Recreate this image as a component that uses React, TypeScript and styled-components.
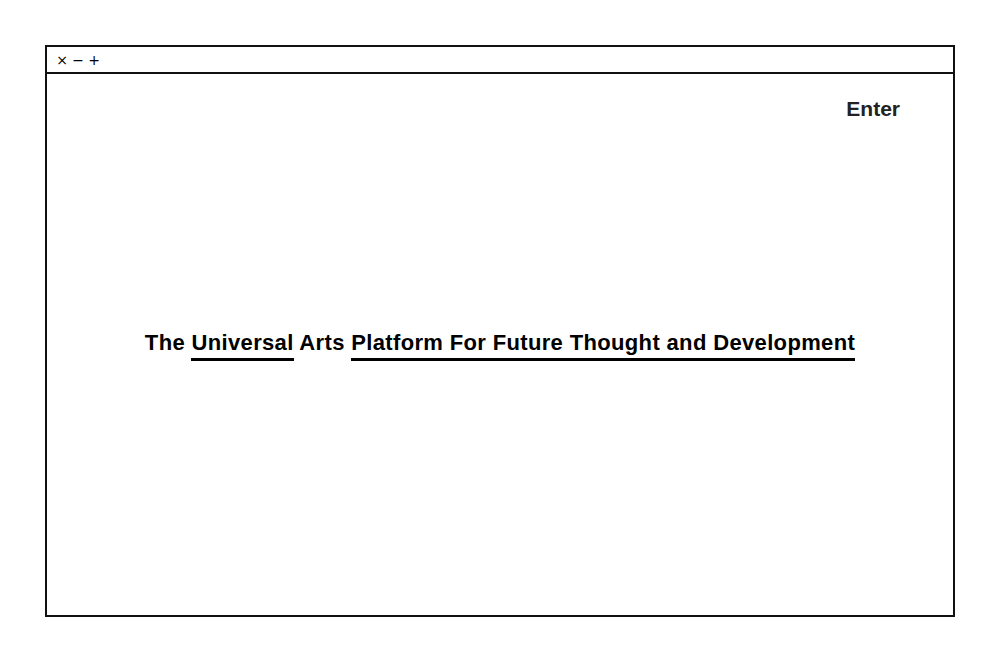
import React from "react";
import styled, { createGlobalStyle } from "styled-components";

const Global = createGlobalStyle`
  html, body { margin: 0; padding: 0; background: #fff; }
  body { font-family: "Liberation Sans", Arial, sans-serif; color: #000; }
`;

const Page = styled.div`
  box-sizing: border-box;
  height: 663px;
  padding: 45px 45px 46px;
  display: flex;
`;

const Window = styled.div`
  box-sizing: border-box;
  flex: 1;
  border: 2px solid #111;
  display: flex;
  flex-direction: column;
`;

const TitleBar = styled.div`
  box-sizing: border-box;
  height: 27px;
  border-bottom: 2px solid #111;
  display: flex;
  align-items: center;
  gap: 4px;
  padding: 0 0 0 9px;
  line-height: 1;
  color: #000;
`;

const Ctrl = styled.span`
  display: inline-block;
  width: 12px;
  text-align: center;
  font-family: "DejaVu Sans", sans-serif;
  font-size: 14px;
  color: #000;
`;

const Body = styled.div`
  flex: 1;
  display: flex;
  flex-direction: column;
`;

const TopRow = styled.div`
  display: flex;
  justify-content: flex-end;
  padding: 23px 53px 0 0;
`;

const EnterLink = styled.a`
  font-size: 21px;
  font-weight: 700;
  color: #222;
  text-decoration: none;
`;

const Center = styled.div`
  flex: 1;
  display: flex;
  align-items: center;
  justify-content: center;
  padding-bottom: 44px;
`;

const Headline = styled.h1`
  margin: 0;
  font-size: 22px;
  letter-spacing: 0.35px;
  font-weight: 700;
  line-height: 1;
  white-space: nowrap;
`;

const Under = styled.span`
  display: inline-block;
  padding-bottom: 4px;
  border-bottom: 3px solid #000;
`;

export default function App() {
  return (
    <>
      <Global />
      <Page>
        <Window>
          <TitleBar>
            <Ctrl>×</Ctrl>
            <Ctrl>−</Ctrl>
            <Ctrl>+</Ctrl>
          </TitleBar>
          <Body>
            <TopRow>
              <EnterLink href="#">Enter</EnterLink>
            </TopRow>
            <Center>
              <Headline>
                The <Under>Universal</Under> Arts{" "}
                <Under>Platform For Future Thought and Development</Under>
              </Headline>
            </Center>
          </Body>
        </Window>
      </Page>
    </>
  );
}
